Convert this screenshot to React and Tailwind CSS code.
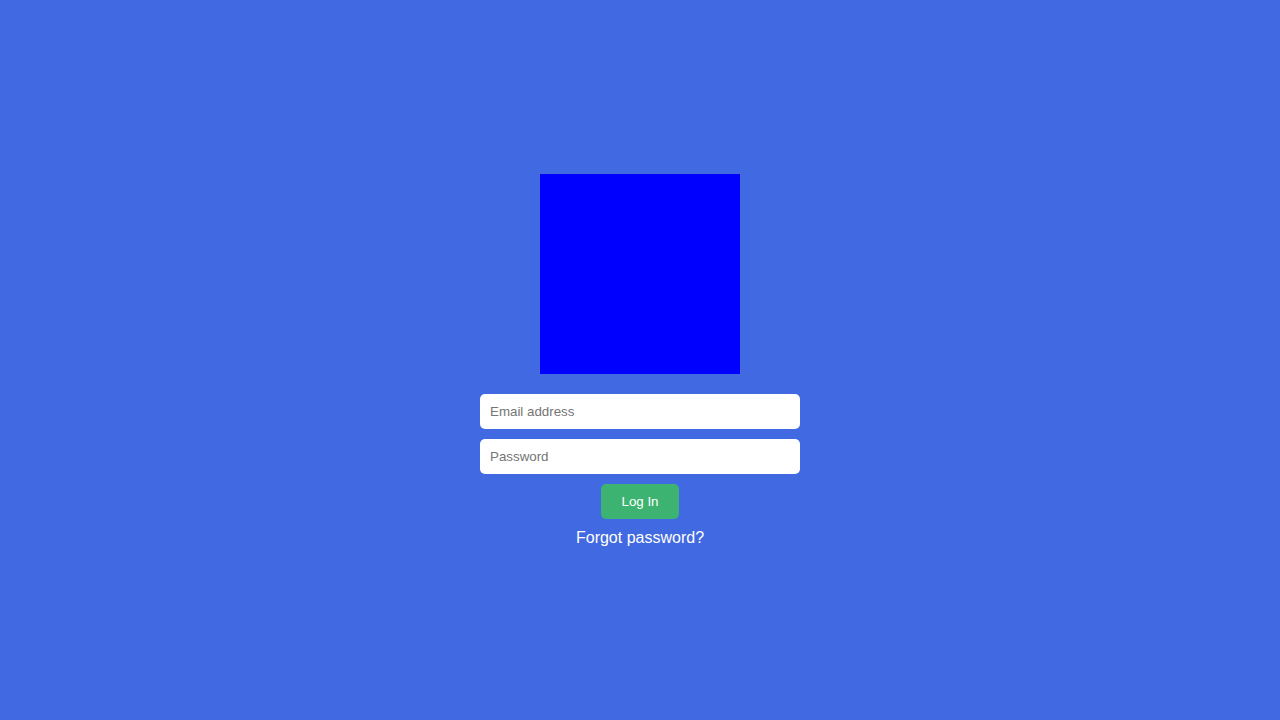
export default function App() {
  return (
    <div className="flex min-h-screen w-full items-center justify-center bg-[#4169e1] font-['Liberation_Sans',Arial,sans-serif]">
      <div className="flex flex-col items-center">
        <div className="mb-[20px] h-[200px] w-[200px] bg-[#0000ff]" />
        <form className="flex w-[320px] flex-col items-center gap-[10px]" onSubmit={(e) => e.preventDefault()}>
          <input
            type="email"
            placeholder="Email address"
            className="h-[35px] w-full rounded-[5px] bg-white px-[10px] text-[13.33px] text-gray-800 outline-none placeholder:text-[#757575]"
          />
          <input
            type="password"
            placeholder="Password"
            className="h-[35px] w-full rounded-[5px] bg-white px-[10px] text-[13.33px] text-gray-800 outline-none placeholder:text-[#757575]"
          />
          <button
            type="submit"
            className="h-[35px] w-[78px] rounded-[5px] bg-[#3cb371] text-[13.33px] text-white"
          >
            Log In
          </button>
        </form>
        <a href="#" className="mt-[10px] text-[16px] leading-[17px] text-white">
          Forgot password?
        </a>
      </div>
    </div>
  );
}
